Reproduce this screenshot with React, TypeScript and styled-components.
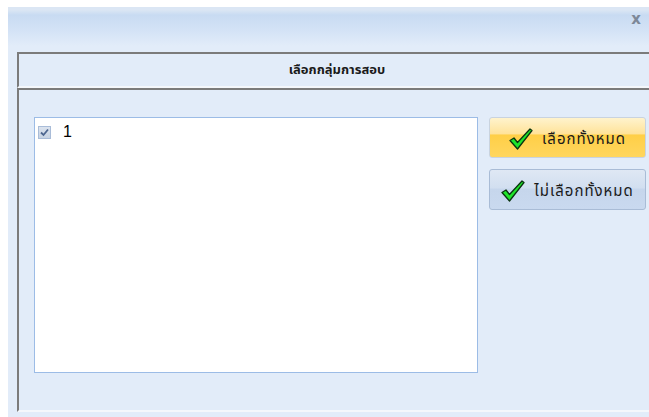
import styled, { createGlobalStyle } from "styled-components";

const GlobalStyle = createGlobalStyle`
  html, body {
    margin: 0;
    padding: 0;
    background: #ffffff;
    font-family: Tahoma, "Noto Sans Thai", "Noto Sans", "DejaVu Sans", sans-serif;
  }
`;

const Screen = styled.div`
  width: 649px;
  height: 417px;
  padding: 7px 0 0 8px;
  box-sizing: border-box;
  overflow: hidden;
`;

const Window = styled.div`
  height: 410px;
  display: flex;
  flex-direction: column;
  background: #e2ecf9;
`;

const TitleBar = styled.div`
  height: 39px;
  flex-shrink: 0;
  display: flex;
  justify-content: flex-end;
  align-items: flex-start;
  padding: 5px 8px 0 0;
  box-sizing: border-box;
  background: linear-gradient(#dbe6f4 0px, #dbe6f4 3px, #c8dbf2 8px, #d4e3f6 24px, #e2ecf9 39px);
`;

const CloseButton = styled.span`
  font-family: "DejaVu Sans", sans-serif;
  font-weight: bold;
  font-size: 15px;
  line-height: 15px;
  color: #7d8898;
`;

const Body = styled.div`
  flex: 1;
  display: flex;
  flex-direction: column;
  padding: 6px 0 5px 9px;
`;

const GroupHeader = styled.div`
  height: 36px;
  flex-shrink: 0;
  display: flex;
  align-items: center;
  justify-content: center;
  border-top: 2px solid #7b7b7b;
  border-left: 2px solid #7b7b7b;
  border-bottom: 2px solid #f4f7fb;
  box-sizing: border-box;
  font-weight: bold;
  font-size: 13px;
  color: #1a1a1a;
  padding-left: 6px;
`;

const GroupBody = styled.div`
  flex: 1;
  display: flex;
  gap: 11px;
  padding: 27px 0 0 15px;
  border-top: 2px solid #7b7b7b;
  border-left: 2px solid #7b7b7b;
  border-bottom: 2px solid #f4f7fb;
  box-sizing: border-box;
`;

const ListBox = styled.div`
  width: 444px;
  height: 256px;
  flex-shrink: 0;
  background: #ffffff;
  border: 1px solid #9cbce6;
  box-sizing: border-box;
  padding: 5px 3px;
`;

const ListItem = styled.label`
  display: flex;
  align-items: center;
  gap: 12px;
  font-family: "Liberation Sans", Arial, sans-serif;
  font-size: 16px;
  color: #000;
`;

const CheckBox = styled.span`
  width: 11px;
  height: 11px;
  border: 1px solid #a9bcd8;
  background: linear-gradient(#dbe3ee, #c7d3e3);
  display: flex;
  align-items: center;
  justify-content: center;
`;

const Buttons = styled.div`
  display: flex;
  flex-direction: column;
  gap: 11px;
`;

const ActionButton = styled.button<{ $active?: boolean }>`
  width: 157px;
  height: 41px;
  display: flex;
  align-items: center;
  justify-content: center;
  gap: 9px;
  border-radius: 3px;
  border: 1px solid ${(p) => (p.$active ? "#c9d3df" : "#a9bcd6")};
  background: ${(p) =>
    p.$active
      ? "linear-gradient(#fff3cd 0%, #ffe39a 40%, #ffcf47 44%, #ffd65e 100%)"
      : "linear-gradient(#dfe8f4 0%, #d2dff0 45%, #c6d6ec 50%, #c9d9ef 100%)"};
  font-family: Tahoma, "Noto Sans Thai", sans-serif;
  font-size: 15px;
  letter-spacing: 1px;
  color: #1a1a1a;
  padding: 3px 0 0 0;
  white-space: nowrap;
  cursor: pointer;
`;

function CheckMark() {
  return (
    <svg width="24" height="22" viewBox="0 0 24 22">
      <path
        d="M1 12.5 L5 10 L8.5 14.5 L21 1 L23 2.5 L8.5 21 Z"
        fill="#1fe52a"
        stroke="#0b3410"
        strokeWidth="1.3"
        strokeLinejoin="round"
      />
    </svg>
  );
}

function SmallTick() {
  return (
    <svg width="9" height="9" viewBox="0 0 9 9">
      <path d="M1 4.5 L3.5 7 L8 1.5" fill="none" stroke="#4d6690" strokeWidth="1.8" />
    </svg>
  );
}

export default function App() {
  return (
    <>
      <GlobalStyle />
      <Screen>
        <Window>
          <TitleBar>
            <CloseButton>x</CloseButton>
          </TitleBar>
          <Body>
            <GroupHeader>เลือกกลุ่มการสอบ</GroupHeader>
            <GroupBody>
              <ListBox>
                <ListItem>
                  <CheckBox>
                    <SmallTick />
                  </CheckBox>
                  1
                </ListItem>
              </ListBox>
              <Buttons>
                <ActionButton $active>
                  <CheckMark />
                  เลือกทั้งหมด
                </ActionButton>
                <ActionButton>
                  <CheckMark />
                  ไม่เลือกทั้งหมด
                </ActionButton>
              </Buttons>
            </GroupBody>
          </Body>
        </Window>
      </Screen>
    </>
  );
}
